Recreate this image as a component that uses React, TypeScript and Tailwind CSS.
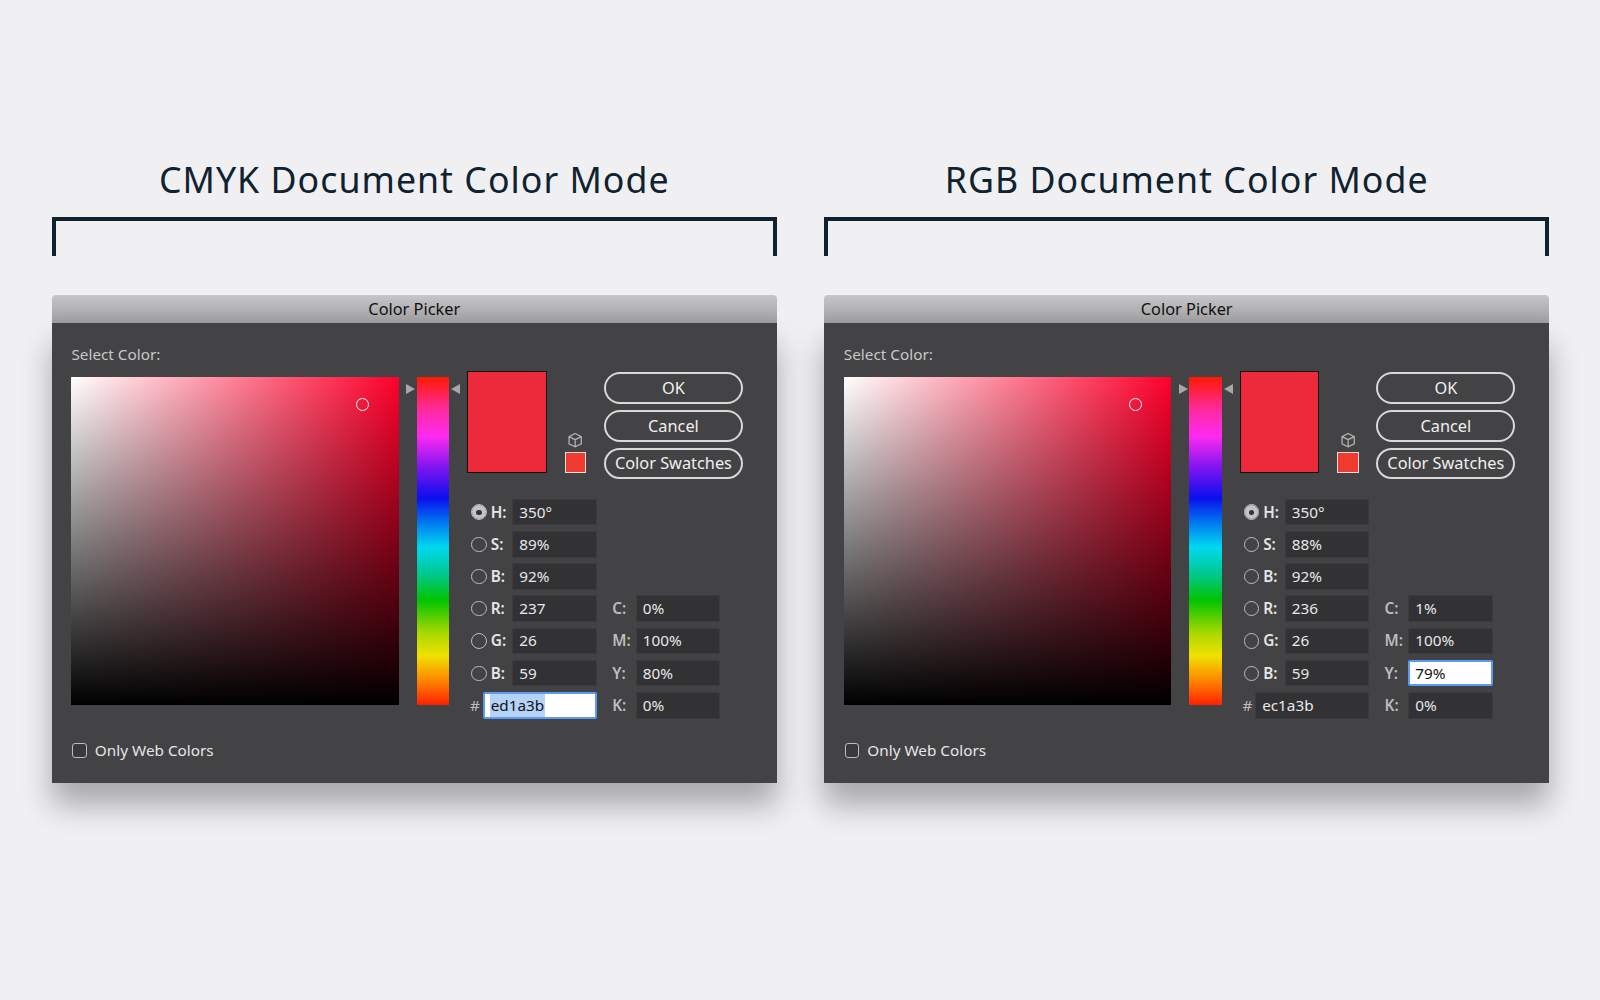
import React from "react";

type PickerProps = {
  s: string;
  r: string;
  c: string;
  y: string;
  hex: string;
  hexFocus: boolean;
  yFocus: boolean;
};

const Field = ({ value, focus, select, wide }: { value: string; focus?: boolean; select?: boolean; wide?: boolean }) => (
  <div
    className={
      (wide ? "w-[112px] " : "w-[83px] ") +
      (focus
        ? "h-[26px] bg-white border-2 border-[#5b9bf0] rounded-[2px] px-[5px] flex items-center text-[#111] text-[15px]"
        : "h-[26px] bg-[#323133] border border-[#3b3a3c] px-[6px] flex items-center text-[#e8e8e8] text-[15px]")
    }
  >
    {select ? <span className="bg-[#b5d3f7] text-[#111] px-[1px]">{value}</span> : value}
  </div>
);

const Radio = ({ on }: { on?: boolean }) => (
  <div className="w-[15px] h-[15px] rounded-full border border-[#bdbdbd] flex items-center justify-center">
    {on && <div className="w-[13px] h-[13px] rounded-full bg-[#c4c4c4] flex items-center justify-center"><div className="w-[5px] h-[5px] rounded-full bg-[#333]" /></div>}
  </div>
);

const Row = ({ label, value, on, right }: { label: string; value: string; on?: boolean; right?: React.ReactNode }) => (
  <div className="flex items-center h-[26px]">
    <div className="w-[23px] flex justify-center"><Radio on={on} /></div>
    <span className="w-[21px] text-[15px] font-semibold text-[#e6e6e6]">{label}</span>
    <Field value={value} />
    {right}
  </div>
);

const Right = ({ label, value, focus }: { label: string; value: string; focus?: boolean }) => (
  <div className="flex items-center ml-[15px]">
    <span className="w-[23px] text-[15px] font-semibold text-[#bdbdbd]">{label}</span>
    <Field value={value} focus={focus} />
  </div>
);

const Btn = ({ children }: { children: React.ReactNode }) => (
  <div className="h-[31px] w-[136px] rounded-[16px] border-2 border-[#d8d8d8] flex items-center justify-center text-[16px] text-[#f0f0f0]">
    {children}
  </div>
);

const Picker = (p: PickerProps) => (
  <div className="flex flex-col w-[710px]">
    <div className="h-[28px] bg-gradient-to-b from-[#c7c6c8] to-[#9e9da0] rounded-t-[4px] flex items-center justify-center text-[16px] text-[#111]">
      Color Picker
    </div>
    <div className="h-[450px] bg-[#434244] pl-[19px] pt-[21px] shadow-[0_22px_28px_rgba(0,0,0,0.3)]">
      <div className="text-[15px] text-[#c8c8c8] h-[18px] leading-[18px]">Select Color:</div>
      <div className="flex mt-[8px]">
        <div
          className="relative w-[321px] h-[321px] mt-[6px]"
          style={{
            background:
              "linear-gradient(to top, #000, rgba(0,0,0,0)), linear-gradient(to right, #fff, #ff002b)",
          }}
        >
          <div className="absolute left-[279px] top-[20px] w-[13px] h-[13px] rounded-full border border-white" />
        </div>
        <div className="relative w-[67px] h-[327px] mt-[6px] flex justify-center">
          <div
            className="w-[32px] h-[321px]"
            style={{
              background:
                "linear-gradient(to bottom, #ff1a00 0%, #ff2aa0 10%, #ff2af0 18%, #7a14f0 28%, #0a10ee 37%, #0080f0 45%, #00d8f0 52%, #00c890 60%, #00c400 68%, #a8d800 78%, #f0e000 85%, #ff8000 93%, #ff2000 100%)",
            }}
          />
          <div className="absolute left-[7px] top-[6px] w-0 h-0 border-y-[5px] border-y-transparent border-l-[9px] border-l-[#a8a8a8]" />
          <div className="absolute right-[7px] top-[6px] w-0 h-0 border-y-[5px] border-y-transparent border-r-[9px] border-r-[#a8a8a8]" />
        </div>
        <div className="flex flex-col">
          <div className="flex">
            <div className="w-[78px] h-[100px] bg-[#ed2a3b] border border-[#111]" />
            <div className="w-[56px] flex flex-col items-center pt-[59px] gap-[4px]">
              <svg width="16" height="16" viewBox="0 0 16 16" fill="none" stroke="#b0b0b0" strokeWidth="1.3">
                <path d="M8 1.5 14 4.5v7L8 14.5 2 11.5v-7z M2 4.5 8 7.5 14 4.5 M8 7.5v7" />
              </svg>
              <div className="w-[21px] h-[21px] bg-[#f03a2e] border border-[#ddd]" />
            </div>
            <div className="flex flex-col gap-[6px] mt-[1px]">
              <Btn>OK</Btn>
              <Btn>Cancel</Btn>
              <Btn>Color Swatches</Btn>
            </div>
          </div>
          <div className="flex flex-col gap-[5.6px] mt-[19px]">
            <Row label="H:" value="350°" on />
            <Row label="S:" value={p.s} />
            <Row label="B:" value="92%" />
            <Row label="R:" value={p.r} right={<Right label="C:" value={p.c} />} />
            <Row label="G:" value="26" right={<Right label="M:" value="100%" />} />
            <Row label="B:" value="59" right={<Right label="Y:" value={p.y} focus={p.yFocus} />} />
            <div className="flex items-center h-[26px]">
              <span className="w-[15px] text-[15px] text-[#bdbdbd] text-center">#</span>
              <Field value={p.hex} focus={p.hexFocus} select={p.hexFocus} wide />
              <Right label="K:" value="0%" />
            </div>
          </div>
        </div>
      </div>
      <div className="flex items-center gap-[8px] mt-[20px] ml-[1px]">
        <div className="w-[14px] h-[14px] rounded-[3px] border border-[#bdbdbd] bg-[#3a393b]" />
        <span className="text-[15px] text-[#e6e6e6]">Only Web Colors</span>
      </div>
    </div>
  </div>
);

const Column = ({ title, children }: { title: string; children: React.ReactNode }) => (
  <div className="flex flex-col w-[710px]">
    <div className="h-[46px] mt-[3px] flex items-center justify-center text-[35px] tracking-[1px] text-[#0f2230] font-['Lato',sans-serif]">
      {title}
    </div>
    <div className="mt-[14px] h-[38px] border-t-[4px] border-x-[4px] border-[#0f2230]" />
    <div className="mt-[38px]">{children}</div>
  </div>
);

export default function App() {
  return (
    <div className="w-[1600px] h-[1000px] overflow-hidden bg-[#f0eff2]">
      <div className="[zoom:1.0204] w-[1568px] h-[980px] font-['Open_Sans',sans-serif] pl-[51px] pt-[150px] flex gap-[47px]">
        <Column title="CMYK Document Color Mode">
          <Picker s="89%" r="237" c="0%" y="80%" hex="ed1a3b" hexFocus yFocus={false} />
        </Column>
        <Column title="RGB Document Color Mode">
          <Picker s="88%" r="236" c="1%" y="79%" hex="ec1a3b" hexFocus={false} yFocus />
        </Column>
      </div>
    </div>
  );
}
